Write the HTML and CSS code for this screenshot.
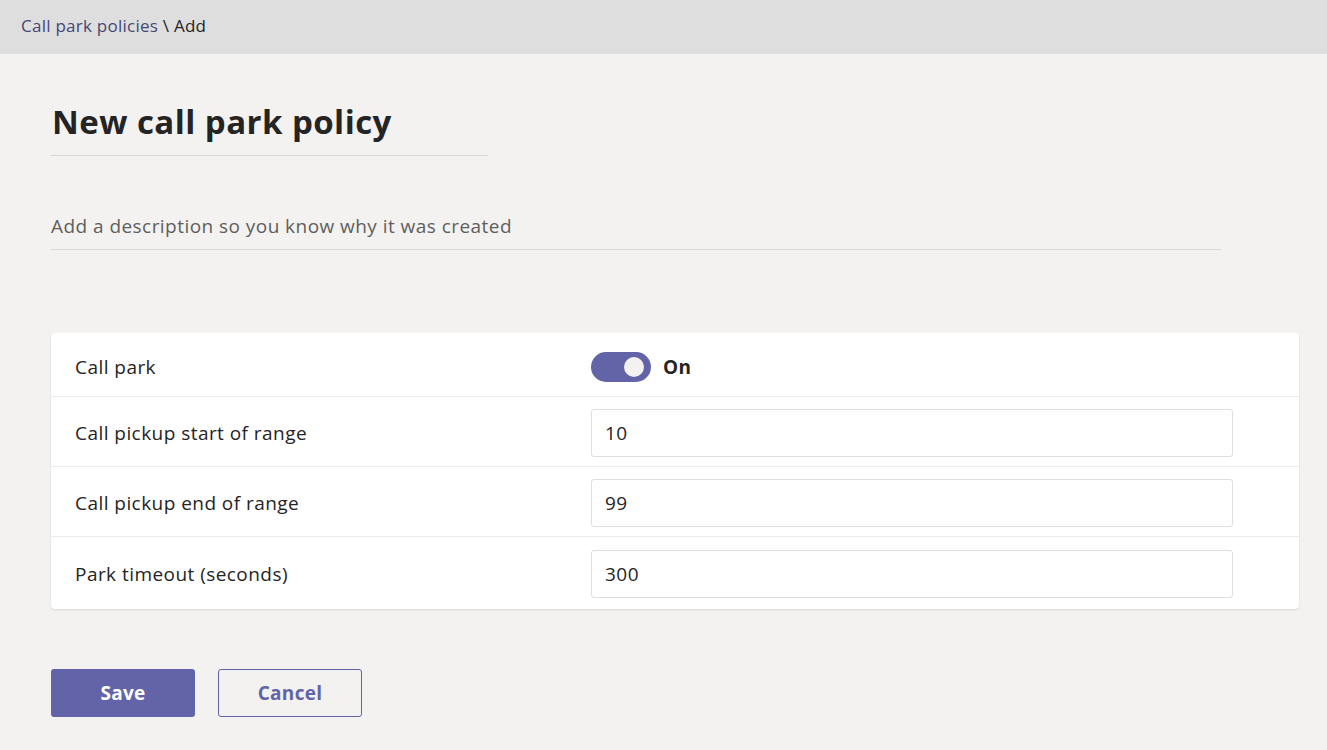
FILE: index.html
```html
<!DOCTYPE html>
<html>
<head>
<meta charset="utf-8">
<link rel="stylesheet" href="styles.css">
</head>
<body>
<header class="topbar">
  <span class="crumb-link">Call park policies</span><span class="crumb-cur"> \ Add</span>
</header>
<main class="page">
  <div class="title-wrap">
    <h1 class="title">New call park policy</h1>
  </div>
  <div class="desc-wrap">
    <span class="desc">Add a description so you know why it was created</span>
  </div>
  <section class="card">
    <div class="row row-first">
      <div class="label">Call park</div>
      <div class="control">
        <span class="toggle"><span class="thumb"></span></span>
        <span class="toggle-text">On</span>
      </div>
    </div>
    <div class="row">
      <div class="label">Call pickup start of range</div>
      <div class="control"><div class="input">10</div></div>
    </div>
    <div class="row">
      <div class="label">Call pickup end of range</div>
      <div class="control"><div class="input">99</div></div>
    </div>
    <div class="row row-last">
      <div class="label">Park timeout (seconds)</div>
      <div class="control"><div class="input">300</div></div>
    </div>
  </section>
  <div class="actions">
    <button class="btn btn-primary">Save</button>
    <button class="btn btn-secondary">Cancel</button>
  </div>
</main>
</body>
</html>
```
FILE: styles.css
```css
* { box-sizing: border-box; }
html, body { margin: 0; padding: 0; }
body {
  background: #f3f2f1;
  font-family: "Open Sans", "Noto Sans", sans-serif;
  color: #252423;
  width: 1327px;
  height: 750px;
  overflow: hidden;
}
.topbar {
  height: 54px;
  background: #dedede;
  padding-left: 21px;
  padding-bottom: 4px;
  display: flex;
  align-items: center;
  font-size: 17px;
  letter-spacing: 0.25px;
}
.crumb-link { color: #464775; }
.crumb-cur { color: #252424; white-space: pre; }
.page { padding: 0 28px 0 51px; }
.title-wrap {
  width: 437px;
  border-bottom: 1px solid #d8d7d6;
  padding-top: 46px;
  height: 102px;
}
.title {
  margin: 0;
  font-size: 33px;
  letter-spacing: 0.45px;
  font-weight: 700;
  line-height: 44px;
  color: #252424;
  padding-left: 1px;
}
.desc-wrap {
  width: 1170px;
  margin-top: 56px;
  height: 38px;
  padding-top: 2px;
  border-bottom: 1px solid #d8d7d6;
  font-size: 19px;
  letter-spacing: 0.45px;
  color: #605e5c;
  line-height: 24px;
}
.card {
  margin-top: 83px;
  width: 1248px;
  background: #fff;
  border-radius: 4px;
  box-shadow: 0 1px 2px rgba(0,0,0,0.12);
}
.row {
  display: flex;
  align-items: center;
  height: 70px;
  border-bottom: 1px solid #edebe9;
  padding-left: 24px;
  padding-top: 2px;
}
.row-first { height: 64px; padding-top: 4px; }
.row-last { height: 72px; border-bottom: none; }
.label {
  width: 516px;
  font-size: 19px;
  letter-spacing: 0.45px;
  color: #252424;
}
.control { display: flex; align-items: center; }
.toggle {
  width: 60px;
  height: 30px;
  border-radius: 15px;
  background: #6264a7;
  position: relative;
  display: inline-block;
}
.thumb {
  position: absolute;
  right: 7px;
  top: 5px;
  width: 20px;
  height: 20px;
  border-radius: 50%;
  background: #f3f2f1;
}
.toggle-text {
  margin-left: 12px;
  font-size: 19px;
  letter-spacing: 0.3px;
  font-weight: 700;
  color: #252424;
}
.input {
  width: 642px;
  height: 48px;
  border: 1px solid #e1dfdd;
  border-radius: 3px;
  background: #fff;
  display: flex;
  align-items: center;
  padding-left: 13px;
  font-size: 19px;
  letter-spacing: 0.45px;
  color: #252424;
}
.actions {
  margin-top: 60px;
  display: flex;
  gap: 23px;
}
.btn {
  width: 144px;
  height: 48px;
  border-radius: 3px;
  font-family: inherit;
  font-size: 19px;
  letter-spacing: 0.3px;
  font-weight: 700;
  cursor: pointer;
}
.btn-primary {
  background: #6264a7;
  color: #fff;
  border: none;
}
.btn-secondary {
  background: #f3f2f1;
  color: #6264a7;
  border: 1px solid #6264a7;
}
```
